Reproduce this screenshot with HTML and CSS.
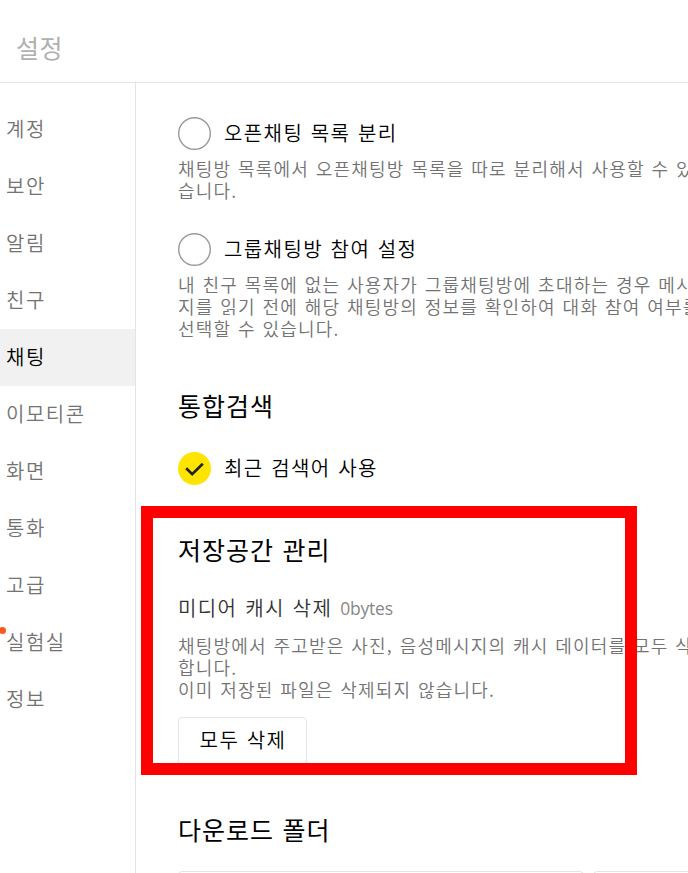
FILE: index.html
```
<!DOCTYPE html>
<html lang="ko">

<head>
    <meta charset="UTF-8">
    <title>설정</title>
    <meta name="viewport" content="width=device-width, initial-scale=1">
    <link rel="stylesheet" href="styles.css">
</head>

<body>
    <header class="header">설정</header>

    <div class="layout">
        <nav class="sidebar">
            <a class="menu-item">계정</a>
            <a class="menu-item">보안</a>
            <a class="menu-item">알림</a>
            <a class="menu-item">친구</a>
            <a class="menu-item active">채팅</a>
            <a class="menu-item">이모티콘</a>
            <a class="menu-item">화면</a>
            <a class="menu-item">통화</a>
            <a class="menu-item">고급</a>
            <a class="menu-item has-dot">실험실</a>
            <a class="menu-item">정보</a>
        </nav>

        <main class="content">
            <section class="option">
                <label class="option-row">
                    <svg class="check" viewBox="0 0 33 33">
                        <circle cx="16.5" cy="16.5" r="15.8" fill="none" stroke="#999" stroke-width="1.4" />
                    </svg>
                    <span class="option-title">오픈채팅 목록 분리</span>
                </label>
                <p class="desc">채팅방 목록에서 오픈채팅방 목록을 따로 분리해서 사용할 수 있<br>습니다.</p>
            </section>

            <section class="option">
                <label class="option-row">
                    <svg class="check" viewBox="0 0 33 33">
                        <circle cx="16.5" cy="16.5" r="15.8" fill="none" stroke="#999" stroke-width="1.4" />
                    </svg>
                    <span class="option-title">그룹채팅방 참여 설정</span>
                </label>
                <p class="desc">내 친구 목록에 없는 사용자가 그룹채팅방에 초대하는 경우 메시<br>지를 읽기 전에 해당 채팅방의 정보를 확인하여 대화 참여 여부를<br>선택할 수 있습니다.</p>
            </section>

            <section class="search">
                <h2>통합검색</h2>
                <label class="option-row">
                    <svg class="check" viewBox="0 0 33 33">
                        <circle cx="16.5" cy="16.5" r="16.5" fill="#ffe400" />
                        <path d="M8.2 16.2l6 6L24.8 11.7" fill="none" stroke="#222" stroke-width="2.7" />
                    </svg>
                    <span class="option-title">최근 검색어 사용</span>
                </label>
            </section>

            <section class="storage">
                <h2>저장공간 관리</h2>
                <div class="cache-row">
                    <span class="cache-title">미디어 캐시 삭제</span>
                    <span class="cache-size">0bytes</span>
                </div>
                <p class="desc">채팅방에서 주고받은 사진, 음성메시지의 캐시 데이터를 모두 삭<br>합니다.<br>이미 저장된 파일은 삭제되지 않습니다.</p>
                <button class="delete-button">모두 삭제</button>
            </section>

            <section class="download">
                <h2>다운로드 폴더</h2>
                <div class="folder-row">
                    <div class="folder-path"></div>
                    <div class="folder-change"></div>
                </div>
            </section>
        </main>
    </div>

    <div class="highlight"></div>
</body>

</html>
```
FILE: styles.css
```
:root {
    --line-color: #e4e4e4;
    --text-color: #000;
    --sub-color: #737373;
    --active-bg: #f1f1f1;
    --dot-color: #fa5a1e;
}

* {
    box-sizing: border-box;
}

body {
    margin: 0;
    height: 873px;
    overflow: hidden;
    position: relative;
    display: flex;
    flex-direction: column;
    background: #fff;
    color: var(--text-color);
    font-family: "Noto Sans CJK KR", sans-serif;
    font-weight: 350;
    white-space: nowrap;
}

.header {
    flex: none;
    height: 83px;
    padding: 11px 0 0 16px;
    border-bottom: 1px solid var(--line-color);
    font-size: 25px;
    font-weight: 400;
    line-height: 72px;
    letter-spacing: 0.6px;
    color: #b0b0b0;
}

.layout {
    flex: 1;
    min-height: 0;
    display: flex;
}

.sidebar {
    flex: none;
    width: 136px;
    padding-top: 18px;
    border-right: 1px solid var(--line-color);
}

.menu-item {
    display: block;
    position: relative;
    height: 57px;
    padding-left: 6px;
    font-size: 20px;
    line-height: 56px;
    letter-spacing: 1.5px;
    color: var(--sub-color);
}

.menu-item.active {
    background: var(--active-bg);
    color: var(--text-color);
}

.has-dot::before {
    content: "";
    position: absolute;
    left: -1px;
    top: 13px;
    width: 7px;
    height: 7px;
    border-radius: 50%;
    background: var(--dot-color);
}

.content {
    flex: 1;
    min-width: 0;
    overflow: hidden;
    padding: 34px 0 0 42px;
}

.option {
    margin-bottom: 31px;
}

.option-row {
    display: flex;
    align-items: center;
    height: 33px;
}

.check {
    flex: none;
    width: 33px;
    height: 33px;
}

.option-title {
    margin-left: 13px;
    padding-bottom: 2px;
    font-size: 20px;
    line-height: 31px;
    letter-spacing: 1.4px;
    word-spacing: 0.6px;
}

.desc {
    margin: 7px 0 0;
    padding-bottom: 1px;
    font-size: 18px;
    line-height: 22px;
    letter-spacing: 1.2px;
    word-spacing: 0.5px;
    color: var(--sub-color);
}

h2 {
    margin: 0;
    padding-bottom: 2px;
    font-size: 25px;
    font-weight: 400;
    line-height: 34px;
    letter-spacing: 1px;
    word-spacing: 0.5px;
}

.search {
    margin-top: 48px;
}

.search .option-row {
    margin-top: 28px;
}

.storage {
    margin-top: 47px;
}

.cache-row {
    display: flex;
    align-items: center;
    height: 22px;
    margin-top: 29px;
}

.cache-title {
    padding-bottom: 2px;
    font-size: 20px;
    letter-spacing: 1.4px;
    word-spacing: 0.8px;
    color: #333;
}

.cache-size {
    margin-left: 8px;
    font-family: "Open Sans", sans-serif;
    font-size: 17.5px;
    font-weight: 400;
    letter-spacing: -0.2px;
    color: #888;
}

.storage .desc {
    margin-top: 15px;
}

.delete-button {
    display: block;
    width: 129px;
    height: 48px;
    margin-top: 16px;
    padding: 0 0 3px 1px;
    border: 1px solid var(--line-color);
    border-radius: 4px;
    background: #fff;
    color: var(--text-color);
    font: inherit;
    font-size: 20px;
    letter-spacing: 1.4px;
    word-spacing: 0.6px;
}

.download {
    margin-top: 47px;
}

.folder-row {
    display: flex;
    gap: 9px;
    margin-top: 23px;
}

.folder-path,
.folder-change {
    flex: none;
    width: 406px;
    height: 48px;
    border: 1px solid var(--line-color);
    border-radius: 4px;
}

.folder-change {
    width: 129px;
}

/* red frame over the storage section */
.highlight {
    position: absolute;
    left: 141px;
    top: 506px;
    width: 496px;
    height: 269px;
    border: 12px solid #f00;
}
```
